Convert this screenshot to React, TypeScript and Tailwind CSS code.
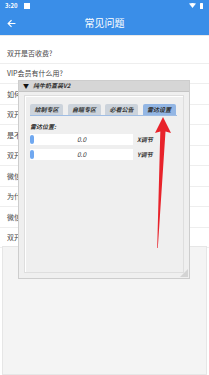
import React from "react";

const items = [
  "双开是否收费?",
  "VIP会员有什么用?",
  "如何使用双开功能?",
  "双开应用闪退怎么办?",
  "是不是所有应用都能双开?",
  "双开应用收不到消息?",
  "微信双开安全吗?",
  "为什么双开后无法登录?",
  "微信双开如何备份数据?",
  "双开应用如何卸载?",
];

export default function App() {
  const font = { fontFamily: '"Noto Sans CJK SC", "Noto Sans", sans-serif' };
  return (
    <div className="relative w-[209px] h-[375px] overflow-hidden bg-white" style={font}>
      {/* status + header */}
      <div className="h-[35px] bg-[#3a8ee8] flex flex-col">
        <div className="h-[11px] flex items-center justify-between px-[5px]">
          <div className="flex items-center gap-[6px]">
            <span className="text-[6px] leading-none text-white font-semibold">3:20</span>
            <div className="w-[6px] h-[6px] bg-white" />
          </div>
          <div className="flex items-center gap-[4px] mr-[1px]">
            <svg width="7" height="5" viewBox="0 0 7 5"><path d="M0 0.6 Q3.5 -0.6 7 0.6 L3.5 5 Z" fill="white" /></svg>
            <div className="w-[3px] h-[6px] bg-white rounded-[0.5px]" />
          </div>
        </div>
        <div className="flex-1 relative flex items-center justify-center">
          <svg className="absolute left-[7px] top-[8px]" width="9" height="9" viewBox="0 0 24 24" fill="none" stroke="white" strokeWidth="3" strokeLinecap="square">
            <path d="M21 12H4M11 4l-8 8 8 8" />
          </svg>
          <span className="text-[10px] text-white -mt-[1px]">常见问题</span>
        </div>
      </div>
      {/* list */}
      <div className="pt-[7px] border-t border-[#e9e9e9]">
        {items.map((t, i) => (
          <div key={i} className="h-[20.5px] flex items-center px-[7px] border-b border-[#eeeeee] text-[7px] text-[#444444]">
            <span className="text-[#444444]">{t}</span>
          </div>
        ))}
      </div>
      <div className="absolute left-[2px] top-[246px] w-[205px] h-[129px] bg-[#f4f4f4] border border-[#e6e6e6]" />

      {/* floating panel */}
      <div className="absolute left-[18px] top-[80px] w-[172px] h-[199px] bg-[#efefef] border border-[#cdcdcd] flex flex-col">
        <div className="h-[11px] bg-[#d6d6d6] border-b border-[#c4c4c4] flex items-center gap-[4px] px-[4px]">
          <span className="text-[6px] leading-none text-[#111]">▼</span>
          <span className="text-[6px] leading-none italic font-bold text-[#333]">纯牛奶直装V2</span>
        </div>
        <div className="flex-1 px-[5px] pt-[3px] pb-[5px]">
          <div className="h-full border border-[#dedede] shadow-[inset_1px_1px_0_#ffffff] px-[5px] pt-[8px]">
            <div className="flex gap-[4.5px] border-b border-[#9fbde4] w-[147px]">
              {["绘制专区", "自瞄专区", "必看公告", "雷达设置"].map((t, i) => (
                <div
                  key={t}
                  className={`h-[11px] w-[33px] rounded-t-[2px] flex items-center justify-center text-[6px] font-bold italic text-[#333] ${i === 3 ? "bg-[#93b6e4]" : "bg-[#ccd3db]"}`}
                >
                  {t}
                </div>
              ))}
            </div>
            <div className="mt-[8px] text-[6px] leading-none font-bold italic text-[#333]">雷达位置:</div>
            <div className="mt-[4px] flex flex-col gap-[4px]">
              {["X调节", "Y调节"].map((l) => (
                <div key={l} className="flex items-center gap-[4px]">
                  <div className="relative w-[103px] h-[11px] bg-white flex items-center justify-center">
                    <div className="absolute left-0 top-[1px] w-[4px] h-[9px] rounded-[2px] bg-[#70a8f0]" />
                    <span className="text-[6.5px] italic text-[#333]">0.0</span>
                  </div>
                  <span className="text-[6px] font-bold italic text-[#333]">{l}</span>
                </div>
              ))}
            </div>
          </div>
        </div>
        <svg className="absolute right-[1px] bottom-[1px]" width="8" height="8" viewBox="0 0 8 8">
          <path d="M8 0 L8 8 L0 8 Z" fill="#d4d4d4" />
        </svg>
      </div>

      {/* red arrow */}
      <svg className="absolute left-0 top-0 pointer-events-none" width="209" height="375" viewBox="0 0 209 375">
        <polygon points="163,117 171,133 165.5,131.5 157.8,248 157.2,248 160.3,131.5 155,133" fill="#e8232b" />
      </svg>
    </div>
  );
}
